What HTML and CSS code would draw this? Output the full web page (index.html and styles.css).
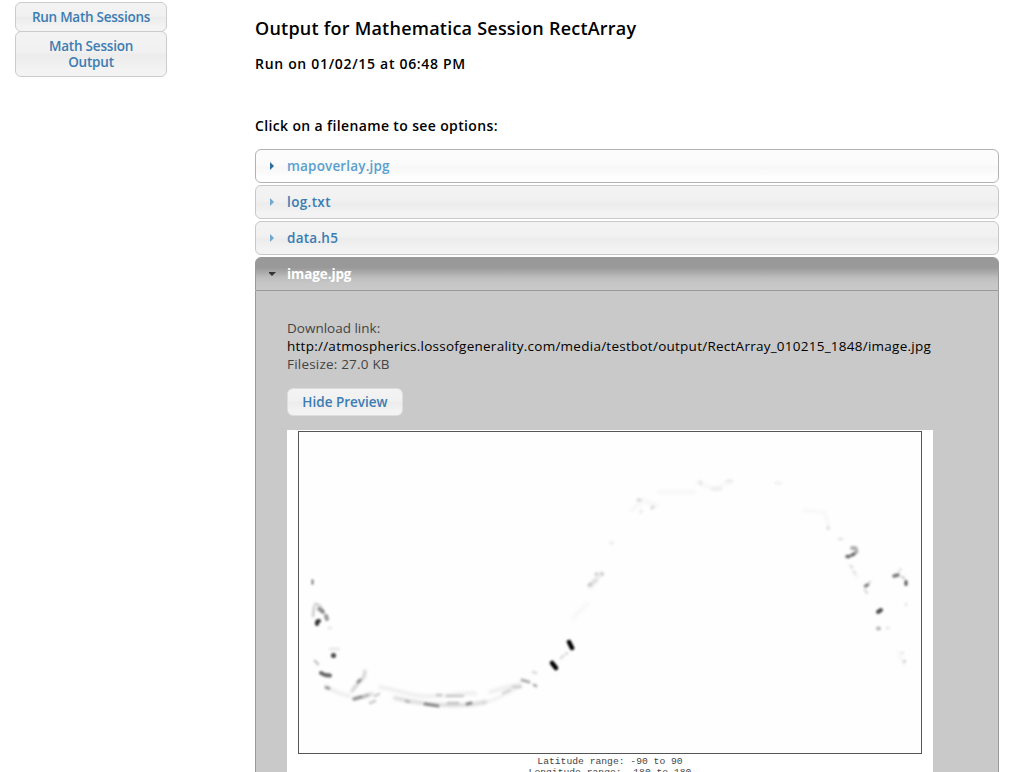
FILE: index.html
```html
<!DOCTYPE html>
<html lang="en">
<head>
<meta charset="utf-8">
<title>Math Session Output</title>
<link rel="stylesheet" href="styles.css">
</head>
<body>
<div class="page">
  <nav class="sidebar">
    <a class="button nav-run">Run Math Sessions</a>
    <a class="button nav-output"><span>Math Session</span><span>Output</span></a>
  </nav>
  <main class="content">
    <h2 class="title">Output for Mathematica Session RectArray</h2>
    <p class="run-date">Run on 01/02/15 at 06:48 PM</p>
    <p class="hint">Click on a filename to see options:</p>
    <div class="accordion">
      <h3 class="file file-hover"><i class="arrow"></i>mapoverlay.jpg</h3>
      <h3 class="file file-log"><i class="arrow"></i>log.txt</h3>
      <h3 class="file file-data"><i class="arrow"></i>data.h5</h3>
      <h3 class="file file-active"><i class="arrow arrow-down"></i>image.jpg</h3>
      <section class="panel">
        <div class="details">
          <div>Download link:</div>
          <div><a class="link">http://atmospherics.lossofgenerality.com/media/testbot/output/RectArray_010215_1848/image.jpg</a></div>
          <div class="size">Filesize: 27.0 KB</div>
        </div>
        <a class="button preview-button">Hide Preview</a>
        <figure class="preview">
          <svg class="plot" width="646" height="325" viewBox="287 430 646 325">
            <defs>
              <filter id="soft" x="-5%" y="-5%" width="110%" height="110%"><feGaussianBlur stdDeviation="1.05"/></filter>
              <filter id="wide" x="-5%" y="-5%" width="110%" height="110%"><feGaussianBlur stdDeviation="1.8"/></filter>
            </defs>
            <rect x="298.5" y="431.5" width="623" height="322" fill="#fefefe" stroke="#555"/>
            <g filter="url(#wide)" fill="none" stroke="#000" stroke-linecap="round">
              <path d="M326 686Q340 695 350 696M380 687Q395 690 410 694T450 695T475 694M490 692Q503 688 520 684" stroke-width="4" opacity=".06"/>
              <path d="M354 699L372 694M395 698Q420 704 445 705T485 702" stroke-width="4" opacity=".12"/>
              <path d="M483 703Q502 698 520 686" stroke-width="3" opacity=".06"/>
              <path d="M365 671L364 677L359 682L352 691" stroke-width="3" opacity=".18"/>
              <path d="M573 618L588 603M591 588L600 573" stroke-width="4" opacity=".025"/>
              <path d="M590 586L601 574" stroke-width="5" opacity=".05"/>
              <path d="M632 510L643 500L657 506M660 492L694 492M698 483L715 489L731 481" stroke-width="5" opacity=".025"/>
              <path d="M804 510L825 513L829 528M850 565L857 577M898 652L904 665" stroke-width="4" opacity=".025"/>
            </g>
            <g filter="url(#soft)" stroke="#000" stroke-linecap="round" fill="none">
              <path d="M312.500 580v4" stroke-width="1.5" opacity=".7"/>
              <path d="M315 604q5 0 8 7M314 607l-1 9" stroke-width="3" opacity=".17"/>
              <path d="M319 609l4 3M326 616l1 3" stroke-width="4" opacity=".4"/>
              <path d="M318 621h1M317 624v-2" stroke-width="4" opacity=".8"/>
              <path d="M329 628h2M330 649h9" stroke-width="3" opacity=".08"/>
              <path d="M315 661l3 3" stroke-width="3" opacity=".2"/>
              <circle cx="333.500" cy="655.500" r="1.5" stroke-width="2" opacity=".78"/>
              <path d="M321 673l2 1M325 675l5 .5" stroke-width="4" opacity=".6"/>
              <path d="M326 687.500l3 1M354 699l7-2M358 682l2-2" stroke-width="3" opacity=".35"/>
              <path d="M363 697l5-2M370 703l5-2M375 696l4-2M406 701l3 1M448 703h10" stroke-width="3" opacity=".17"/>
              <path d="M437 695h4M447 696l16 0" stroke-width="2.500" opacity=".18"/>
              <path d="M425 704l13 2M467 704l4-1" stroke-width="3" opacity=".4"/>
              <path d="M522 680l7 2M534 685l2 1" stroke-width="3" opacity=".3"/>
              <path d="M503 693l7-3M513 687h8M533 672l3 1M561 658l2-2M566 654l1-1" stroke-width="3" opacity=".12"/>
              <path d="M552 663l4 5" stroke-width="4.500"/>
              <path d="M569 642l3 6" stroke-width="4.500"/>
              <path d="M596 574h.5M602 574h.5M589 585l2-1" stroke-width="3.500" opacity=".16"/>
              <path d="M611 543h1M594 581h2M641 511v1M700 482l1 1" stroke-width="4" opacity=".06"/>
              <path d="M638 500h2M652 508l1-1" stroke-width="3.500" opacity=".12"/>
              <path d="M713 489h8M727 481h4M776 483h4" stroke-width="4" opacity=".04"/>
              <path d="M839 539l3 0M828 527v2M851 566l1 1M854 572l1 1" stroke-width="3" opacity=".09"/>
              <path d="M852 548h3M856 549l.5 3" stroke-width="4" opacity=".3"/>
              <path d="M847 556.500h2M852 555l2-1" stroke-width="3.500" opacity=".58"/>
              <path d="M865.500 586l2-1" stroke-width="3.500" opacity=".48"/>
              <path d="M865 590l2 3M869 583l1-1" stroke-width="3" opacity=".12"/>
              <path d="M878 612l3-2" stroke-width="4" opacity=".7"/>
              <path d="M878 628.500h1" stroke-width="4" opacity=".28"/>
              <path d="M894 576l4-1" stroke-width="3.500" opacity=".52"/>
              <path d="M899 571l2-2M906 604v1M887 628h2M902 653h1" stroke-width="3" opacity=".08"/>
              <path d="M902 577l2 1M904.500 661v.5" stroke-width="3" opacity=".16"/>
              <path d="M906 581.500v3" stroke-width="3" opacity=".65"/>
            </g>
          </svg>
          <figcaption class="caption">
            <div>Latitude range: -90 to 90</div>
            <div>Longitude range: -180 to 180</div>
          </figcaption>
        </figure>
      </section>
    </div>
  </main>
</div>
</body>
</html>
```
FILE: styles.css
```css
* { box-sizing: border-box; }
body {
  margin: 0;
  height: 772px;
  overflow: hidden;
  background: #fff;
  color: #000;
  font-family: "Trebuchet MS", "Open Sans", sans-serif;
  font-size: 13.5px;
}
.page { display: flex; gap: 88px; padding-left: 15px; }
.sidebar { width: 152px; padding-top: 2px; display: flex; flex-direction: column; }
.button {
  display: flex;
  flex-direction: column;
  align-items: center;
  justify-content: center;
  border: 1px solid #ccc;
  border-radius: 6px;
  background: linear-gradient(#f3f3f3 0%, #f1f1f1 45%, #ececec 52%, #f3f3f3 85%);
  color: #3b7cb2;
  font-weight: 600;
  line-height: 16px;
}
.nav-run { height: 30px; letter-spacing: -0.25px; }
.nav-output { height: 46px; margin-top: -1px; letter-spacing: -0.2px; }
.content { width: 744px; }
.title, .run-date, .hint { margin: 0; font-weight: 600; white-space: nowrap; }
.title { padding-top: 16px; font-size: 18px; line-height: 24px; letter-spacing: 0.23px; }
.run-date { padding-top: 14px; font-size: 14px; line-height: 20px; letter-spacing: 0.69px; }
.hint { padding-top: 42px; font-size: 14px; line-height: 20px; letter-spacing: 0.36px; }
.accordion { padding-top: 13px; }
.file {
  display: flex;
  align-items: center;
  height: 34px;
  margin: 0 0 2px;
  padding-left: 13px;
  border: 1px solid #c8c8c8;
  border-radius: 6px;
  background: linear-gradient(#f3f3f3 0%, #f1f1f1 45%, #ececec 55%, #f3f3f3 85%);
  color: #3b7cb2;
  font-size: 13.5px;
  font-weight: 700;
  letter-spacing: -0.1px;
}
.file-hover {
  border-color: #b2b2b2;
  background: linear-gradient(#fcfcfc 0%, #fbfbfb 45%, #f7f7f7 55%, #fff 90%);
  color: #599fcf;
  font-weight: 600;
  letter-spacing: 0.17px;
}
.file-log { font-weight: 600; letter-spacing: 0.37px; }
.file-data { font-weight: 600; letter-spacing: 0.25px; }
.file-active {
  margin-bottom: 0;
  border-color: #999;
  border-radius: 6px 6px 0 0;
  background: linear-gradient(#999 0%, #999 30%, #bebebe 62%, #c6c6c6 80%, #c9c9c9 100%);
  color: #fff;
}
.arrow {
  width: 18px;
  height: 8px;
  background: #72a7cf;
  clip-path: polygon(1px 0, 5px 4px, 1px 8px);
}
.file-hover .arrow { background: #2e6e9e; }
.arrow-down { background: #333; clip-path: polygon(-1px 2px, 7px 2px, 3px 6px); }
.panel {
  padding: 28px 31px 0;
  border: 1px solid #999;
  border-top: 0;
  background: #c9c9c9;
}
.details { color: #444; line-height: 18px; white-space: nowrap; }
.link { color: #000; letter-spacing: 0.252px; }
.size { letter-spacing: 0.2px; }
.preview-button { width: 116px; height: 28px; margin-top: 15px; border-color: #ddd; }
.preview { width: 646px; margin: 14px 0 0; background: #fff; }
.plot { display: block; }
.caption {
  padding-top: 1px;
  color: #444;
  font-family: "Courier New", "Liberation Mono", monospace;
  font-size: 9.7px;
  line-height: 11px;
  text-align: center;
}
```
